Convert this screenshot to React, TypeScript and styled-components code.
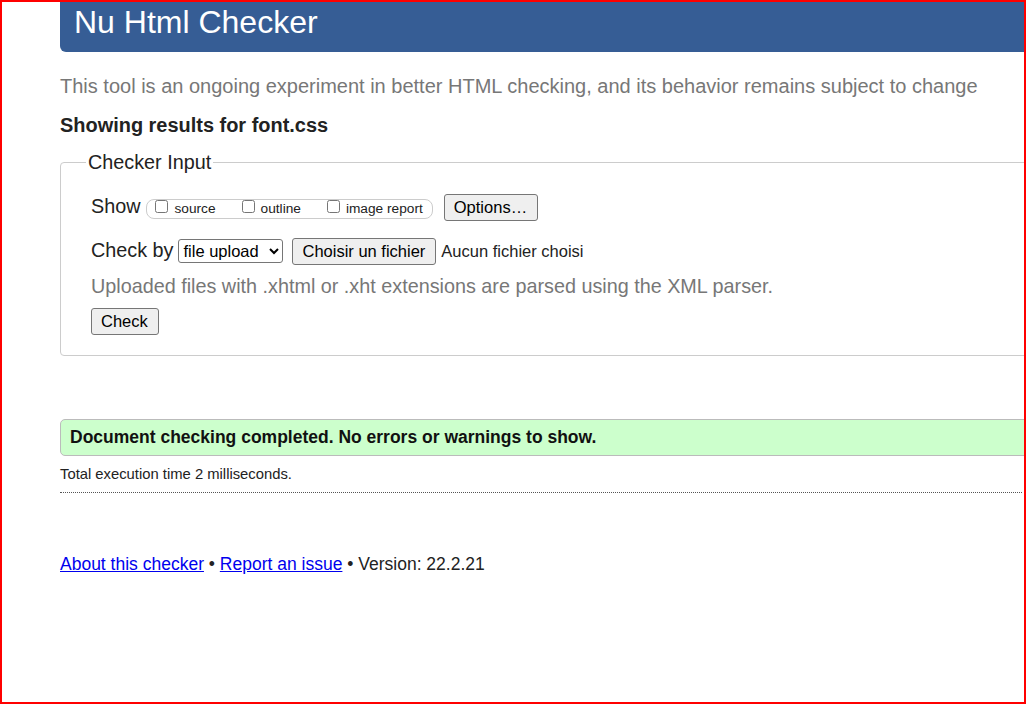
import React from "react";
import styled, { createGlobalStyle } from "styled-components";

const GlobalStyle = createGlobalStyle`
  html, body { margin: 0; padding: 0; background: #fff; }
  body { font-family: Arial, "Liberation Sans", sans-serif; color: #222; }
`;

const Frame = styled.div`
  width: 1026px;
  height: 704px;
  box-sizing: border-box;
  border: 2px solid #ff0000;
  overflow: hidden;
  background: #fff;
`;

const Page = styled.div`
  width: 1200px;
  box-sizing: border-box;
  padding-left: 58px;
`;

const Header = styled.header`
  height: 50px;
  box-sizing: border-box;
  padding: 2px 14px 0;
  background: #365d95;
  border-radius: 0 0 0 6px;
`;

const Title = styled.h1`
  margin: 0;
  font-size: 32px;
  font-weight: normal;
  line-height: normal;
  color: #fff;
`;

const Tagline = styled.p`
  margin: 23px 0 0;
  font-size: 20px;
  color: #777;
`;

const ResultsFor = styled.h2`
  margin: 16px 0 0;
  font-size: 19.95px;
  font-weight: bold;
  color: #222;
`;

const Fieldset = styled.fieldset`
  margin: 14px 0 0;
  padding: 20px 30px;
  border: 1px solid #ccc;
  border-radius: 4px;
  min-width: 0;
`;

const Legend = styled.legend`
  font-size: 19.8px;
  padding: 0 2px;
  margin-left: -5px;
  color: #222;
`;

const Row = styled.div<{ $mt: number }>`
  display: flex;
  align-items: baseline;
  margin-top: ${(p) => p.$mt}px;
`;

const RowLabel = styled.span<{ $mr: number }>`
  font-size: 19.8px;
  color: #222;
  margin-right: ${(p) => p.$mr}px;
`;

const CheckGroup = styled.span`
  display: inline-flex;
  align-items: baseline;
  gap: 22px;
  padding: 0 9px 2px 4px;
  border: 1px solid #ccc;
  border-radius: 8px;
`;

const CheckLabel = styled.label`
  font-size: 13.7px;
  color: #222;
`;

const Checkbox = styled.input`
  width: 13px;
  height: 13px;
  margin: 0 6px 3px 4px;
`;

const Button = styled.button<{ $ml?: number }>`
  font-family: Arial, "Liberation Sans", sans-serif;
  font-size: 16.5px;
  line-height: normal;
  color: #000;
  background: #efefef;
  border: 1px solid #767676;
  border-radius: 3px;
  padding: 3px 10px 3px 9px;
  margin: 0 0 0 ${(p) => p.$ml ?? 0}px;
`;

const Select = styled.select`
  font-family: Arial, "Liberation Sans", sans-serif;
  font-size: 16.5px;
  color: #000;
  width: 105px;
  height: 24px;
  padding: 0;
  border: 1px solid #767676;
  border-radius: 3px;
  background: #fff;
  margin: 0;
`;

const FileStatus = styled.span`
  font-size: 16.5px;
  color: #222;
  margin-left: 5px;
`;

const Hint = styled.p`
  margin: 10px 0 0;
  font-size: 19.8px;
  color: #777;
`;

const Status = styled.div`
  margin-top: 63px;
  padding: 7px 9px;
  background: #ccffcc;
  border: 1px solid #bbb;
  border-radius: 5px;
  font-weight: bold;
  font-size: 17.5px;
  color: #111;
`;

const Timing = styled.p`
  width: 962px;
  margin: 10px 0 0;
  padding-bottom: 10px;
  font-size: 14.8px;
  color: #222;
  border-bottom: 1px dotted #555;
`;

const Footer = styled.p`
  margin: 61px 0 0;
  font-size: 17.5px;
  color: #222;
`;

const Link = styled.a`
  color: #0000ee;
  text-decoration: underline;
`;

export default function App() {
  return (
    <>
      <GlobalStyle />
      <Frame>
        <Page>
          <Header>
            <Title>Nu Html Checker</Title>
          </Header>
          <Tagline>
            This tool is an ongoing experiment in better HTML checking, and its behavior remains subject to change
          </Tagline>
          <ResultsFor>Showing results for font.css</ResultsFor>
          <Fieldset>
            <Legend>Checker Input</Legend>
            <Row $mt={0}>
              <RowLabel $mr={6}>Show</RowLabel>
              <CheckGroup>
                <CheckLabel>
                  <Checkbox type="checkbox" />source
                </CheckLabel>
                <CheckLabel>
                  <Checkbox type="checkbox" />outline
                </CheckLabel>
                <CheckLabel>
                  <Checkbox type="checkbox" />image report
                </CheckLabel>
              </CheckGroup>
              <Button type="button" $ml={11}>Options…</Button>
            </Row>
            <Row $mt={17}>
              <RowLabel $mr={5}>Check by</RowLabel>
              <Select defaultValue="file">
                <option value="address">address</option>
                <option value="file">file upload</option>
                <option value="text">text input</option>
              </Select>
              <Button type="button" $ml={9}>Choisir un fichier</Button>
              <FileStatus>Aucun fichier choisi</FileStatus>
            </Row>
            <Hint>Uploaded files with .xhtml or .xht extensions are parsed using the XML parser.</Hint>
            <Row $mt={10}>
              <Button type="button">Check</Button>
            </Row>
          </Fieldset>
          <Status>Document checking completed. No errors or warnings to show.</Status>
          <Timing>Total execution time 2 milliseconds.</Timing>
          <Footer>
            <Link href="#about">About this checker</Link> • <Link href="#issue">Report an issue</Link> • Version: 22.2.21
          </Footer>
        </Page>
      </Frame>
    </>
  );
}
